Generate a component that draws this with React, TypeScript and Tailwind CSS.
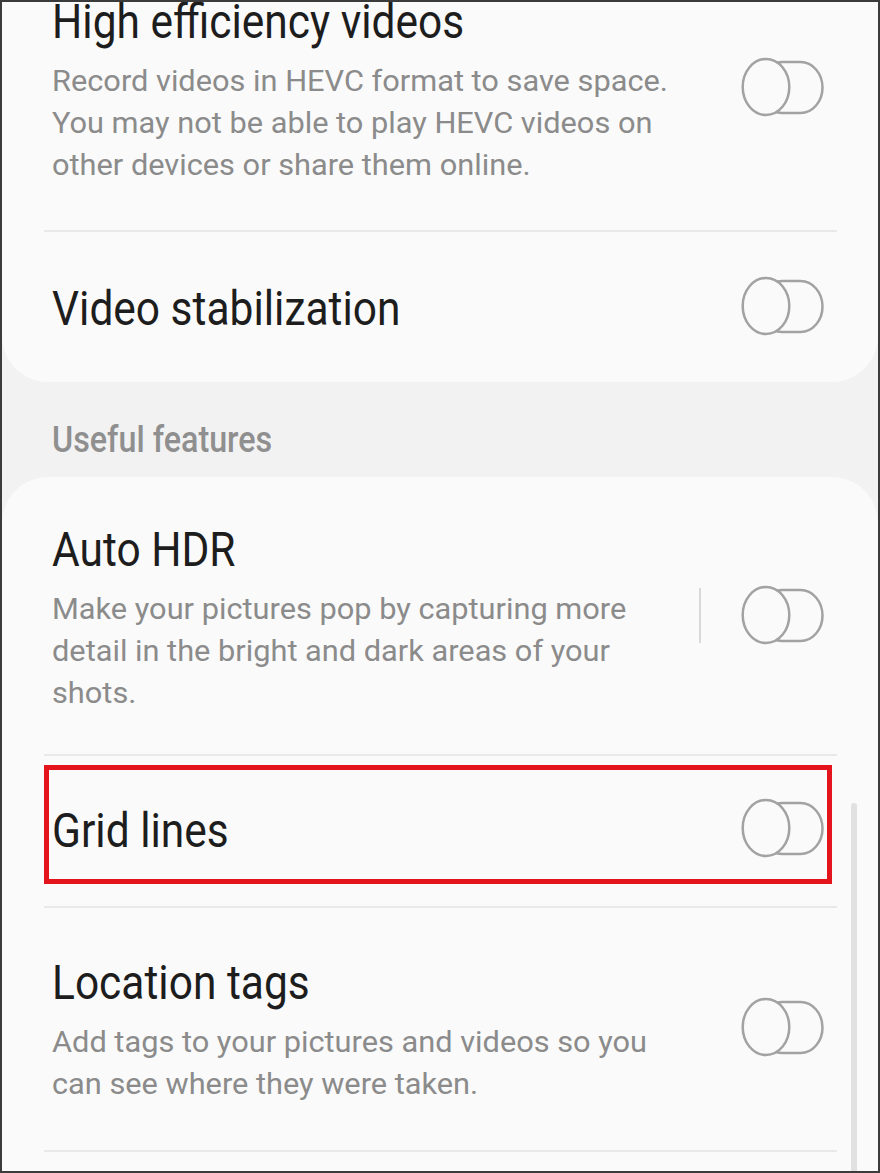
import type { ReactNode } from 'react';

const font = { fontFamily: 'Roboto, "Noto Sans", sans-serif' };

function Toggle() {
  return (
    <svg width="86" height="60" viewBox="0 0 86 60" className="-mt-[8px] -mb-[2px] shrink-0">
      <rect x="20" y="5" width="62.5" height="51" rx="22" ry="25.5" fill="none" stroke="#a2a2a2" strokeWidth="2.5" />
      <ellipse cx="26" cy="30" rx="23.3" ry="28" fill="#fafafa" stroke="#a2a2a2" strokeWidth="2.5" />
    </svg>
  );
}

function Title({ children }: { children: ReactNode }) {
  return (
    <div className="origin-left scale-x-[0.885] whitespace-nowrap text-[48px] leading-[56px] text-[#1d1d1d]">
      {children}
    </div>
  );
}

function Desc({ lines }: { lines: string[] }) {
  return (
    <div className="mt-[10px]">
      {lines.map((l) => (
        <div key={l} className="origin-left scale-x-[1.025] whitespace-nowrap text-[30px] leading-[42px] text-[#8b8b8b]">
          {l}
        </div>
      ))}
    </div>
  );
}

function Row({
  title,
  lines,
  pad,
  sep,
}: {
  title: string;
  lines?: string[];
  pad: string;
  sep?: boolean;
}) {
  return (
    <div className={`flex items-center pl-[50px] pr-[52px] ${pad}`}>
      <div className="flex-1 min-w-0">
        <Title>{title}</Title>
        {lines && <Desc lines={lines} />}
      </div>
      {sep && <div className="mr-[39px] mb-[6px] h-[55px] w-[2px] bg-[#d9d9d9]" />}
      <Toggle />
    </div>
  );
}

function Divider() {
  return <div className="ml-[42px] mr-[41px] h-[2px] bg-[#e9e9e9]" />;
}

export default function App() {
  return (
    <div className="relative h-[1173px] w-[880px] overflow-hidden border-2 border-[#3b3b3b] bg-[#f2f2f2]" style={font}>
      <div className="rounded-b-[46px] bg-[#fafafa]">
        <Row
          title="High efficiency videos"
          lines={[
            'Record videos in HEVC format to save space.',
            'You may not be able to play HEVC videos on',
            'other devices or share them online.',
          ]}
          pad="-mt-[8px] pb-[44px]"
        />
        <Divider />
        <Row title="Video stabilization" pad="pt-[49px] pb-[45px]" />
      </div>

      <div className="pl-[50px] pt-[37px] pb-[16px]">
        <div className="origin-left scale-x-[0.897] whitespace-nowrap text-[36px] font-medium leading-[42px] text-[#8f8f8f]">
          Useful features
        </div>
      </div>

      <div className="rounded-t-[46px] bg-[#fafafa]">
        <Row
          title="Auto HDR"
          lines={[
            'Make your pictures pop by capturing more',
            'detail in the bright and dark areas of your',
            'shots.',
          ]}
          pad="pt-[45px] pb-[40px]"
          sep
        />
        <Divider />
        <div className="relative">
          <Row title="Grid lines" pad="py-[47px]" />
          <div className="pointer-events-none absolute left-[42px] right-[46px] top-[9px] bottom-[22px] border-[5px] border-[#e3141b]" />
        </div>
        <Divider />
        <Row
          title="Location tags"
          lines={['Add tags to your pictures and videos so you', 'can see where they were taken.']}
          pad="pt-[47px] pb-[45px]"
        />
        <Divider />
        <div className="h-[40px]" />
      </div>

      <div className="absolute left-[849px] top-[801px] bottom-0 w-[6px] rounded-t-full bg-[#e1e1e1]" />
    </div>
  );
}
